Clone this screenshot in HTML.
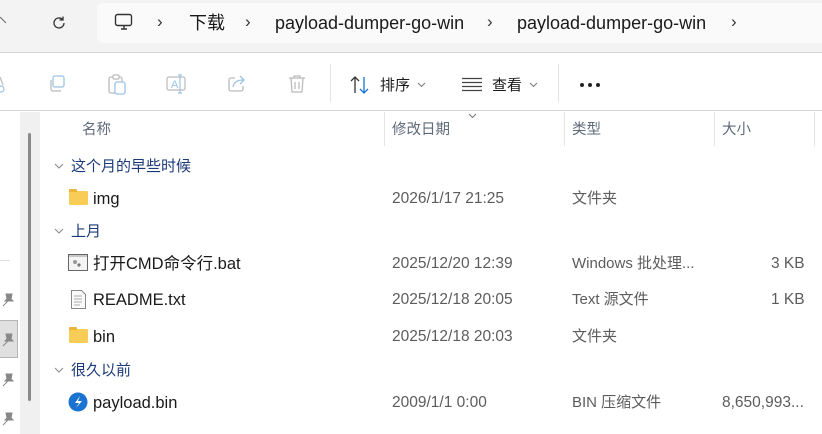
<!DOCTYPE html>
<html><head><meta charset="utf-8"><style>
*{margin:0;padding:0;box-sizing:border-box}
body{width:822px;height:434px;overflow:hidden;background:#fff;position:relative;font-family:"Liberation Sans","Noto Sans CJK SC",sans-serif;color:#1a1a1a}
.a{position:absolute;white-space:nowrap;line-height:20px}
.top{left:0;top:0;width:822px;height:53px;background:#f3f3f3;border-bottom:1px solid #d6d6d6}
.addr{left:97px;top:3px;width:740px;height:40px;background:#fafafa;border-radius:6px}
.bc{font-size:18px;color:#1a1a1a;top:13px}
.chev{font-size:17px;color:#333;top:12px}
.tb{left:0;top:54px;width:822px;height:57px;border-bottom:1px solid #d6d6d6}
.h{font-size:14.5px;color:#5f6a7a;top:120px}
.vd{top:112px;width:1px;height:34px;background:#e5e5e5}
.g{font-size:15px;color:#1c3a7a}
.n{font-size:16.5px;color:#1a1a1a}
.d{font-size:15.5px;color:#5c5c5c}
.t{font-size:15px;color:#5c5c5c}
.folder{width:19px;height:14px;background:#f7cd58;border-radius:1px}
.folder:before{content:"";position:absolute;left:0;top:-2px;width:8px;height:3px;background:#e9b53a;border-radius:1px 1px 0 0}
</style></head><body>
<div class="a top"></div>
<div class="a addr"></div>
<svg class="a" style="left:0;top:16px" width="8" height="10"><path d="M0 1l6 6" stroke="#777" stroke-width="1.2"/></svg>
<svg class="a" style="left:50px;top:14px" width="18" height="18" viewBox="0 0 18 18"><path d="M14 9a5 5 0 1 1-1.5-3.6M13 2.5v3.5h-3.5" fill="none" stroke="#333" stroke-width="1.3"/></svg>
<svg class="a" style="left:114px;top:13px" width="20" height="18" viewBox="0 0 20 18"><rect x="1.5" y="1.5" width="16" height="11" rx="2" fill="none" stroke="#333" stroke-width="1.4"/><path d="M7 16h6M10 13v3" stroke="#333" stroke-width="1.4"/></svg>
<div class="a chev" style="left:157px">›</div>
<div class="a bc" style="left:189px">下载</div>
<div class="a chev" style="left:245px">›</div>
<div class="a bc" style="left:275px">payload-dumper-go-win</div>
<div class="a chev" style="left:487px">›</div>
<div class="a bc" style="left:517px">payload-dumper-go-win</div>
<div class="a chev" style="left:731px">›</div>
<div class="a tb"></div>
<svg class="a" style="left:0;top:74px" width="8" height="20"><circle cx="1" cy="15" r="3" fill="none" stroke="#9cc3e6" stroke-width="1.2"/><path d="M0 3l3 8" stroke="#bbb" stroke-width="1.2"/></svg>
<svg class="a" style="left:47px;top:74px" width="20" height="20" viewBox="0 0 20 20"><rect x="6" y="2" width="11" height="11" rx="2" fill="none" stroke="#9cc3e6" stroke-width="1.3"/><path d="M4 6v9a2 2 0 0 0 2 2h8" fill="none" stroke="#bbb" stroke-width="1.3"/></svg>
<svg class="a" style="left:107px;top:73px" width="20" height="22" viewBox="0 0 20 22"><rect x="2" y="4" width="13" height="16" rx="2" fill="none" stroke="#bbb" stroke-width="1.3"/><rect x="6" y="2" width="6" height="4" rx="1" fill="#fff" stroke="#bbb" stroke-width="1.2"/><rect x="8" y="9" width="10" height="12" rx="2" fill="#fff" stroke="#9cc3e6" stroke-width="1.3"/></svg>
<svg class="a" style="left:166px;top:74px" width="22" height="20" viewBox="0 0 22 20"><rect x="1" y="3" width="18" height="13" rx="2" fill="none" stroke="#bbb" stroke-width="1.2"/><text x="5" y="14" font-size="11" fill="#9cc3e6" font-family="Liberation Sans">A</text><path d="M14 1v18M12 1h4M12 19h4" stroke="#9cc3e6" stroke-width="1.2"/></svg>
<svg class="a" style="left:227px;top:74px" width="20" height="20" viewBox="0 0 20 20"><path d="M8 4H4a2 2 0 0 0-2 2v9a2 2 0 0 0 2 2h10a2 2 0 0 0 2-2v-3" fill="none" stroke="#bbb" stroke-width="1.3"/><path d="M6 13c1-5 5-7 10-7M13 2l4 4-4 4" fill="none" stroke="#9cc3e6" stroke-width="1.3"/></svg>
<svg class="a" style="left:287px;top:74px" width="20" height="20" viewBox="0 0 20 20"><path d="M2 4h16M7 4V2h6v2M4 4l1 14h10l1-14M8 8v7M12 8v7" fill="none" stroke="#bbb" stroke-width="1.3"/></svg>
<div class="a" style="left:330px;top:64px;width:1px;height:38px;background:#e5e5e5"></div>
<svg class="a" style="left:349px;top:75px" width="22" height="20" viewBox="0 0 22 20"><path d="M6 18V2M2 6l4-4 4 4" fill="none" stroke="#333" stroke-width="1.3"/><path d="M15 2v16M11 14l4 4 4-4" fill="none" stroke="#1a73d0" stroke-width="1.3"/></svg>
<div class="a" style="left:380px;top:76px;font-size:15px">排序</div>
<svg class="a" style="left:417px;top:82px" width="9" height="6"><path d="M1 1l3.5 3.5L8 1" fill="none" stroke="#777"/></svg>
<svg class="a" style="left:461px;top:77px" width="22" height="15"><path d="M1 1.5h20M1 5.5h20M1 9.5h20M1 13.5h20" stroke="#444" stroke-width="1.2"/></svg>
<div class="a" style="left:492px;top:76px;font-size:15px">查看</div>
<svg class="a" style="left:529px;top:82px" width="9" height="6"><path d="M1 1l3.5 3.5L8 1" fill="none" stroke="#777"/></svg>
<div class="a" style="left:558px;top:64px;width:1px;height:38px;background:#e5e5e5"></div>
<svg class="a" style="left:579px;top:82px" width="22" height="6"><circle cx="3" cy="3" r="2" fill="#222"/><circle cx="11" cy="3" r="2" fill="#222"/><circle cx="19" cy="3" r="2" fill="#222"/></svg>
<div class="a" style="left:20px;top:112px;width:20px;height:322px;background:#f0f0f0"></div>
<div class="a" style="left:28px;top:133px;width:3px;height:268px;background:#8a8a8a;border-radius:2px"></div>
<div class="a" style="left:0;top:260px;width:10px;height:1px;background:#ddd"></div>
<div class="a" style="left:0;top:320px;width:18px;height:38px;background:#e0e0e0;border:1px solid #b5b5b5;border-left:none"></div>
<svg class="a" style="left:2px;top:293px" width="12" height="14" viewBox="0 0 12 14"><path d="M4 1h6l-1 5 2 2H3l2-2zM6 8l-5 5" fill="#888" stroke="#888"/></svg>
<svg class="a" style="left:2px;top:333px" width="12" height="14" viewBox="0 0 12 14"><path d="M4 1h6l-1 5 2 2H3l2-2zM6 8l-5 5" fill="#888" stroke="#888"/></svg>
<svg class="a" style="left:2px;top:373px" width="12" height="14" viewBox="0 0 12 14"><path d="M4 1h6l-1 5 2 2H3l2-2zM6 8l-5 5" fill="#888" stroke="#888"/></svg>
<svg class="a" style="left:2px;top:412px" width="12" height="14" viewBox="0 0 12 14"><path d="M4 1h6l-1 5 2 2H3l2-2zM6 8l-5 5" fill="#888" stroke="#888"/></svg>
<div class="a h" style="left:82px">名称</div>
<div class="a vd" style="left:384px"></div>
<svg class="a" style="left:468px;top:113px" width="9" height="6"><path d="M1 1l3.5 3.5L8 1" fill="none" stroke="#777"/></svg>
<div class="a h" style="left:392px">修改日期</div>
<div class="a vd" style="left:564px"></div>
<div class="a h" style="left:572px">类型</div>
<div class="a vd" style="left:714px"></div>
<div class="a h" style="left:722px">大小</div>
<div class="a vd" style="left:814px"></div>
<svg class="a" style="left:54px;top:163px" width="10" height="6"><path d="M1 1l4 4 4-4" fill="none" stroke="#888"/></svg><div class="a g" style="left:71px;top:157px">这个月的早些时候</div>
<svg class="a" style="left:54px;top:228px" width="10" height="6"><path d="M1 1l4 4 4-4" fill="none" stroke="#888"/></svg><div class="a g" style="left:71px;top:222px">上月</div>
<svg class="a" style="left:54px;top:367px" width="10" height="6"><path d="M1 1l4 4 4-4" fill="none" stroke="#888"/></svg><div class="a g" style="left:71px;top:361px">很久以前</div>
<div class="a folder" style="left:69px;top:191px"></div>
<div class="a n" style="left:93px;top:189px">img</div>
<div class="a d" style="left:392px;top:189px">2026/1/17 21:25</div>
<div class="a t" style="left:572px;top:189px">文件夹</div>
<svg class="a" style="left:68px;top:254px" width="20" height="17" viewBox="0 0 20 17"><rect x="0.5" y="0.5" width="19" height="16" fill="#f4f4f4" stroke="#666"/><path d="M1 2h18" stroke="#999"/><circle cx="7" cy="8" r="2" fill="#999"/><circle cx="11" cy="11" r="1.6" fill="#777"/></svg>
<div class="a n" style="left:93px;top:254px">打开CMD命令行.bat</div>
<div class="a d" style="left:392px;top:254px">2025/12/20 12:39</div>
<div class="a t" style="left:572px;top:254px">Windows 批处理...</div>
<div class="a d" style="left:771px;top:254px">3 KB</div>
<svg class="a" style="left:71px;top:290px" width="15" height="19" viewBox="0 0 15 19"><path d="M0.5 0.5h10l4 4v14h-14z" fill="#fafafa" stroke="#888"/><path d="M3 6h8M3 9h8M3 12h8M3 15h6" stroke="#aaa"/></svg>
<div class="a n" style="left:93px;top:290px">README.txt</div>
<div class="a d" style="left:392px;top:290px">2025/12/18 20:05</div>
<div class="a t" style="left:572px;top:290px">Text 源文件</div>
<div class="a d" style="left:771px;top:290px">1 KB</div>
<div class="a folder" style="left:69px;top:329px"></div>
<div class="a n" style="left:93px;top:327px">bin</div>
<div class="a d" style="left:392px;top:327px">2025/12/18 20:03</div>
<div class="a t" style="left:572px;top:327px">文件夹</div>
<svg class="a" style="left:68px;top:392px" width="20" height="20" viewBox="0 0 20 20"><circle cx="10" cy="10" r="9.5" fill="#1a73d0"/><path d="M12 4l-5 7h4l-3 5 6-7h-4z" fill="#fff"/></svg>
<div class="a n" style="left:93px;top:393px">payload.bin</div>
<div class="a d" style="left:392px;top:393px">2009/1/1 0:00</div>
<div class="a t" style="left:572px;top:393px">BIN 压缩文件</div>
<div class="a d" style="left:722px;top:393px">8,650,993...</div>
</body></html>
